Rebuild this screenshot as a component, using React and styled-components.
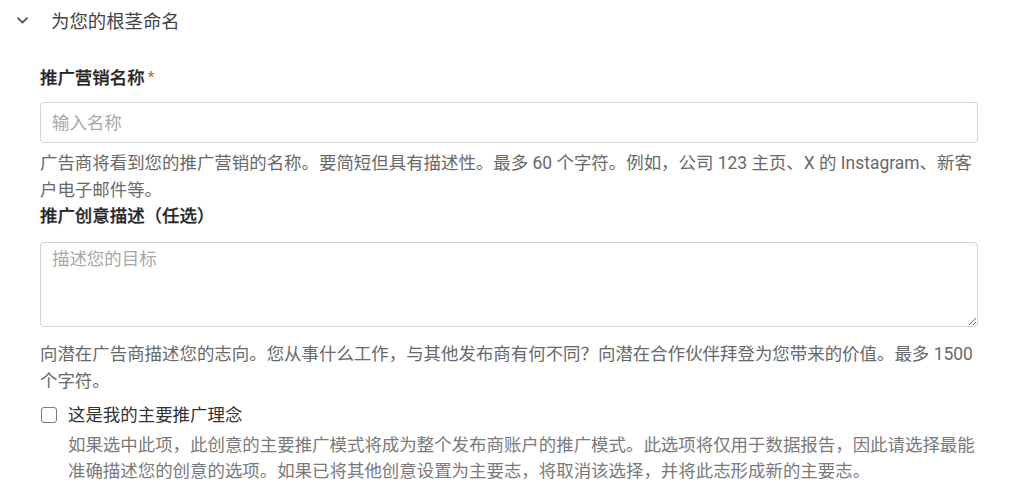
import React from "react";
import styled, { createGlobalStyle } from "styled-components";

const GlobalStyle = createGlobalStyle`
  html, body {
    margin: 0;
    padding: 0;
    background: #ffffff;
  }
  body {
    font-family: Roboto, "Noto Sans CJK SC", sans-serif;
    color: #333;
  }
`;

const FONT = `Roboto, "Noto Sans CJK SC", sans-serif`;
const TEXT_SIZE = "17.45px";

const Section = styled.section`
  width: 1024px;
  box-sizing: border-box;
`;

const SectionHeader = styled.div`
  height: 40px;
  display: flex;
  align-items: center;
  gap: 23px;
  padding-left: 17px;
  font-size: 18.4px;
  color: #444;
  cursor: pointer;
`;

const Body = styled.div`
  width: 938px;
  margin-left: 40px;
  padding-top: 24px;
  display: flex;
  flex-direction: column;
`;

const Label = styled.label`
  display: block;
  font-size: ${TEXT_SIZE};
  line-height: 26px;
  font-weight: 500;
  color: #262626;
  -webkit-text-stroke: 0.25px #262626;
`;

const Required = styled.span`
  color: #e2603c;
  font-size: 15px;
  margin-left: 3px;
  vertical-align: 2px;
  -webkit-text-stroke: 0;
`;

const TextInput = styled.input`
  display: block;
  box-sizing: border-box;
  width: 100%;
  height: 41px;
  margin-top: 11px;
  padding: 0 11px;
  border: 1px solid #d4d4d4;
  border-radius: 4px;
  font-family: ${FONT};
  font-size: ${TEXT_SIZE};
  color: #333;
  outline: none;

  &::placeholder {
    color: #a8a8a8;
  }
`;

const TextArea = styled.textarea`
  display: block;
  box-sizing: border-box;
  width: 100%;
  height: 85px;
  margin-top: 13px;
  padding: 4px 11px;
  border: 1px solid #d4d4d4;
  border-radius: 4px;
  font-family: ${FONT};
  font-size: ${TEXT_SIZE};
  line-height: 24px;
  color: #333;
  resize: vertical;
  outline: none;

  &::placeholder {
    color: #a8a8a8;
  }
`;

const Help = styled.p`
  margin: ${(p) => p.$top || 0}px 0 0;
  font-size: ${TEXT_SIZE};
  line-height: 26.5px;
  color: ${(p) => (p.$muted ? "#7a7a7a" : "#696969")};
`;

const CheckRow = styled.div`
  display: flex;
  align-items: flex-start;
  gap: 11px;
  margin-top: 8px;
`;

const Box = styled.input.attrs({ type: "checkbox" })`
  appearance: none;
  flex: none;
  width: 16px;
  height: 16px;
  margin: 5px 0 0 1px;
  border: 1.5px solid #7a7a7a;
  border-radius: 3px;
  background: #fff;
  box-sizing: border-box;
`;

const CheckText = styled.div`
  flex: 1;
  display: flex;
  flex-direction: column;
`;

const CheckLabel = styled.label`
  font-size: ${TEXT_SIZE};
  line-height: 26.5px;
  color: #333;
`;

const Chevron = () => (
  <svg width="11" height="7" viewBox="0 0 11 7" fill="none">
    <path d="M1 1.2 L5.5 5.6 L10 1.2" stroke="#555" strokeWidth="1.8" strokeLinecap="round" strokeLinejoin="round" />
  </svg>
);

export default function App() {
  return (
    <Section>
      <GlobalStyle />
      <SectionHeader>
        <Chevron />
        <span>为您的根茎命名</span>
      </SectionHeader>
      <Body>
        <Label htmlFor="name">
          推广营销名称<Required>*</Required>
        </Label>
        <TextInput id="name" placeholder="输入名称" />
        <Help $top={7}>
          广告商将看到您的推广营销的名称。要简短但具有描述性。最多 60 个字符。例如，公司 123 主页、X 的 Instagram、新客户电子邮件等。
        </Help>
        <Label htmlFor="desc">推广创意描述（任选）</Label>
        <TextArea id="desc" placeholder="描述您的目标" />
        <Help $top={14}>
          向潜在广告商描述您的志向。您从事什么工作，与其他发布商有何不同？向潜在合作伙伴拜登为您带来的价值。最多 1500 个字符。
        </Help>
        <CheckRow>
          <Box id="primary" />
          <CheckText>
            <CheckLabel htmlFor="primary">这是我的主要推广理念</CheckLabel>
            <Help $top={3} $muted>
              如果选中此项，此创意的主要推广模式将成为整个发布商账户的推广模式。此选项将仅用于数据报告，因此请选择最能准确描述您的创意的选项。如果已将其他创意设置为主要志，将取消该选择，并将此志形成新的主要志。
            </Help>
          </CheckText>
        </CheckRow>
      </Body>
    </Section>
  );
}
